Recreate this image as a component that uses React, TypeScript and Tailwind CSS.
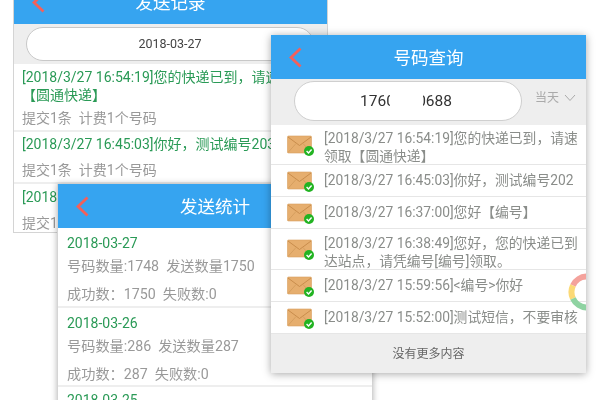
const font = "font-['Roboto','Noto_Sans_CJK_SC',sans-serif]";

function Back() {
  return (
    <svg width="13" height="21" viewBox="0 0 13 21" className="absolute left-[18px] top-[12px]">
      <path d="M11.5 1.5 L2 10.5 L11.5 19.5" fill="none" stroke="#f4605a" strokeWidth="2.8" />
    </svg>
  );
}

function Header({ title }: { title: string }) {
  return (
    <div className="relative flex h-[44px] shrink-0 items-center justify-center bg-[#36a4f0] pt-[2px] text-[17.5px] text-white">
      <Back />
      {title}
    </div>
  );
}

function Envelope() {
  return (
    <svg width="28" height="24" viewBox="0 0 28 24" className="ml-[16px] mr-[9px] shrink-0">
      <rect x="0.5" y="3" width="24" height="17" rx="1" fill="#e6ae6e" stroke="#d9a05e" strokeWidth="0.6" />
      <path d="M1 4 L12.5 12.5 L24 4" fill="none" stroke="#c98d4c" strokeWidth="1" />
      <path d="M1 19.5 L9 10.5 M24 19.5 L16 10.5" fill="none" stroke="#d09a5b" strokeWidth="0.8" />
      <circle cx="22" cy="18" r="5" fill="#22b322" />
      <path d="M19.6 18 L21.5 19.9 L24.6 16.5" fill="none" stroke="#fff" strokeWidth="1.4" />
    </svg>
  );
}

const messages = [
  { h: "h-[40px]", pad: "pt-[5px]", lines: ["[2018/3/27 16:54:19]您的快递已到，请速", "领取【圆通快递】"] },
  { h: "h-[32px]", pad: "pb-[2px]", lines: ["[2018/3/27 16:45:03]你好，测试编号202"] },
  { h: "h-[32px]", pad: "pb-[2px]", lines: ["[2018/3/27 16:37:00]您好【编号】"] },
  { h: "h-[41px]", pad: "pt-[5px]", lines: ["[2018/3/27 16:38:49]您好，您的快递已到", "达站点，请凭编号[编号]领取。"] },
  { h: "h-[32px]", pad: "pb-[1px]", lines: ["[2018/3/27 15:59:56]<编号>你好"] },
  { h: "h-[32px]", pad: "pb-[2px]", lines: ["[2018/3/27 15:52:00]测试短信，不要审核"] },
];

const stats = [
  { date: "2018-03-27", a: "号码数量:1748", b: "发送数量1750", c: "成功数：1750", d: "失败数:0" },
  { date: "2018-03-26", a: "号码数量:286", b: "发送数量287", c: "成功数：287", d: "失败数:0" },
];

export default function App() {
  return (
    <div className={`relative h-[400px] w-[600px] overflow-hidden bg-white blur-[0.4px] ${font}`}>
      {/* 发送记录 */}
      <div className="absolute left-[13px] top-[-20px] flex h-[253px] w-[315px] flex-col overflow-hidden border-x border-b border-[#d4d4d4] bg-white">
        <Header title="发送记录" />
        <div className="flex h-[40px] shrink-0 items-center bg-[#eeeeee] pl-[12px]">
          <div className="flex h-[34px] w-[288px] items-center justify-center rounded-full border border-[#c8c8c8] bg-white text-[12.5px] text-[#444]">
            2018-03-27
          </div>
        </div>
        <div className="h-[68px] shrink-0 border-b-2 border-[#eeeeee] pl-[8px] pt-[5px] text-[14px] leading-[17.5px]">
          <div className="whitespace-nowrap text-[#2a9a56]">[2018/3/27 16:54:19]您的快递已到，请速</div>
          <div className="whitespace-nowrap text-[#2a9a56]">【圆通快递】</div>
          <div className="mt-[6px] whitespace-nowrap text-[#999]">提交1条&nbsp;&nbsp;计费1个号码</div>
        </div>
        <div className="h-[52px] shrink-0 border-b-2 border-[#eeeeee] pl-[8px] pt-[4px] text-[14px] leading-[17.5px]">
          <div className="whitespace-nowrap text-[#2a9a56]">[2018/3/27 16:45:03]你好，测试编号203</div>
          <div className="mt-[8px] whitespace-nowrap text-[#999]">提交1条&nbsp;&nbsp;计费1个号码</div>
        </div>
        <div className="pl-[8px] pt-[5px] text-[14px] leading-[17.5px]">
          <div className="whitespace-nowrap text-[#2a9a56]">[2018/3/27 16:37:00]您好</div>
          <div className="mt-[8px] whitespace-nowrap text-[#999]">提交1条&nbsp;&nbsp;计费1个号码</div>
        </div>
      </div>

      {/* 发送统计 */}
      <div className="absolute left-[57px] top-[184px] flex h-[240px] w-[316px] flex-col overflow-hidden border-x border-[#d4d4d4] bg-white shadow-[0_0_6px_rgba(0,0,0,0.3)]">
        <Header title="发送统计" />
        {stats.map((s) => (
          <div key={s.date} className="h-[79.5px] shrink-0 border-b-2 border-[#eeeeee] pl-[9px] pt-[5px]">
            <div className="text-[14px] leading-[20px] text-[#2a9a56]">{s.date}</div>
            <div className="mt-[3px] text-[14.2px] leading-[20px] text-[#999]">
              {s.a}&nbsp;&nbsp;{s.b}
            </div>
            <div className="mt-[8px] text-[14.2px] leading-[20px] text-[#999]">
              {s.c}&nbsp;&nbsp;{s.d}
            </div>
          </div>
        ))}
        <div className="pl-[9px] pt-[3px] text-[14px] leading-[20px] text-[#2a9a56]">2018-03-25</div>
      </div>

      {/* 号码查询 */}
      <div className="absolute left-[271px] top-[35px] flex h-[338px] w-[315px] flex-col overflow-hidden bg-white shadow-[0_1px_8px_rgba(0,0,0,0.35)]">
        <Header title="号码查询" />
        <div className="flex h-[46px] shrink-0 items-center bg-[#eeeeee] pb-[3px] pl-[23px]">
          <div className="flex h-[40px] w-[228px] items-center rounded-full border border-[#cfcfcf] bg-white pl-[65px] pt-[2px] text-[15.5px] text-[#333]">
            <span className="w-[30px] overflow-hidden whitespace-nowrap">17600</span>
            <span className="ml-[33px] flex w-[29px] justify-end overflow-hidden whitespace-nowrap">0688</span>
          </div>
          <span className="mb-[5px] ml-[13px] text-[12px] text-[#aaa]">当天</span>
          <svg width="12" height="8" viewBox="0 0 12 8" className="mb-[5px] ml-[5px]">
            <path d="M1 1 L6 6.5 L11 1" fill="none" stroke="#aaa" strokeWidth="1" />
          </svg>
        </div>
        {messages.map((m) => (
          <div key={m.lines[0]} className={`flex ${m.h} shrink-0 items-center border-b border-[#e6e6e6]`}>
            <Envelope />
            <div className={`${m.pad} text-[13.8px] leading-[18px] text-[#8a8d8a]`}>
              {m.lines.map((l) => (
                <div key={l} className="whitespace-nowrap">{l}</div>
              ))}
            </div>
          </div>
        ))}
        <div className="flex flex-1 items-center justify-center bg-[#eeeeee] text-[12px] text-[#666]">没有更多内容</div>
        <svg width="40" height="40" viewBox="0 0 40 40" className="absolute left-[296px] top-[237px]">
          <path d="M20 4.5 A15.5 15.5 0 0 0 5.95 13.45" fill="none" stroke="#f4a29c" strokeWidth="6" />
          <path d="M5.95 13.45 A15.5 15.5 0 0 0 5.95 26.55" fill="none" stroke="#fbd976" strokeWidth="6" />
          <path d="M5.95 26.55 A15.5 15.5 0 0 0 20 35.5" fill="none" stroke="#8fd3a2" strokeWidth="6" />
        </svg>
      </div>
    </div>
  );
}
